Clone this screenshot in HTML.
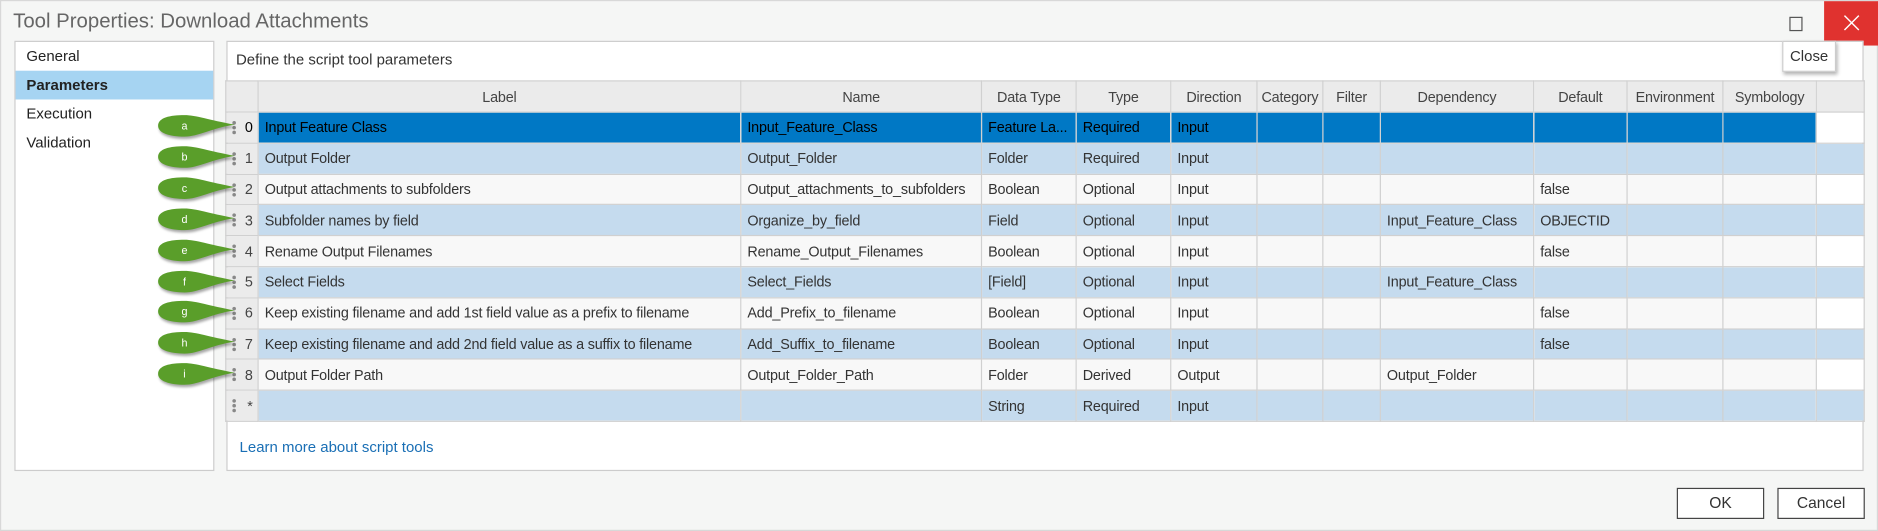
<!DOCTYPE html>
<html><head><meta charset="utf-8"><style>
html,body{margin:0;padding:0;width:1878px;height:531px;overflow:hidden;background:#f5f6f5}
#w{position:absolute;left:0;top:0;width:1568px;height:443px;transform:scale(1.1977,1.1986);transform-origin:0 0;font-family:"Liberation Sans",sans-serif;color:#333;background:#f5f6f5;border:1px solid #d8d8d8;box-sizing:border-box}
.a{position:absolute}
.title{left:10px;top:7px;font-size:17px;color:#666}
.nav{left:11px;top:33px;width:167px;height:359px;background:#fff;border:1px solid #ccc;box-sizing:border-box}
.nav div{height:24px;line-height:24px;padding-left:9px;font-size:12.5px;color:#222}
.nav .sel{background:#a6d4f2;font-weight:bold}
.main{left:188px;top:33px;width:1367px;height:359px;background:#fff;border:1px solid #ccc;box-sizing:border-box}
table{position:absolute;left:187px;top:66px;border-collapse:collapse;table-layout:fixed;font-size:12px;letter-spacing:-0.15px}
td,th{border:1px solid #d0d0d0;height:25.8px;padding:0 0 0 5px;white-space:nowrap;overflow:hidden;text-align:left;font-weight:normal;color:#333;box-sizing:border-box}
th{background:#ebebeb;text-align:center;padding:0;color:#444;height:26px}
td.n{background:#ebebeb;padding:0;text-align:right;padding-right:4px;color:#444;position:relative}
td.n:before{content:"";position:absolute;left:5px;top:7px;width:3px;height:3px;border-radius:50%;background:#888;box-shadow:0 4px 0 #888,0 8px 0 #888}
tr.b td{background:#c5dbee}
tr.g td{background:#f8f8f8}
tr.s td{background:#0078c5;color:#000}
tr td.n{background:#ebebeb}
tr td.e{background:#fff}
tr.b td.e{background:#c5dbee}
.btn{top:406px;width:73px;height:26px;border:1px solid #444;box-sizing:border-box;text-align:center;line-height:24px;font-size:13px;background:#fff;color:#333}
</style></head><body><div id="w">
<div class="a title">Tool Properties: Download Attachments</div>
<div class="a" style="left:1493px;top:13px;width:9px;height:10px;border:1px solid #555"></div>
<div class="a" style="left:1522px;top:0;width:46px;height:37px;background:#e0322f"><svg width="46" height="37"><path d="M17,12 L29,24 M29,12 L17,24" stroke="#fff" stroke-width="1.2"/></svg></div>
<div class="a nav"><div>General</div><div class="sel">Parameters</div><div>Execution</div><div>Validation</div></div>
<div class="a main"></div>
<div class="a" style="left:196px;top:42px;font-size:12.5px;color:#333">Define the script tool parameters</div>
<table>
<colgroup><col style="width:27px"><col style="width:403px"><col style="width:201px"><col style="width:79px"><col style="width:79px"><col style="width:72px"><col style="width:55px"><col style="width:48px"><col style="width:128px"><col style="width:78px"><col style="width:80px"><col style="width:78px"><col style="width:40px"></colgroup>
<tr><th></th><th>Label</th><th>Name</th><th>Data Type</th><th>Type</th><th>Direction</th><th>Category</th><th>Filter</th><th>Dependency</th><th>Default</th><th>Environment</th><th>Symbology</th><th></th></tr>
<tr class="s"><td class="n">0</td><td>Input Feature Class</td><td>Input_Feature_Class</td><td>Feature La...</td><td>Required</td><td>Input</td><td></td><td></td><td></td><td></td><td></td><td></td><td class="e"></td></tr>
<tr class="b"><td class="n">1</td><td>Output Folder</td><td>Output_Folder</td><td>Folder</td><td>Required</td><td>Input</td><td></td><td></td><td></td><td></td><td></td><td></td><td class="e"></td></tr>
<tr class="g"><td class="n">2</td><td>Output attachments to subfolders</td><td>Output_attachments_to_subfolders</td><td>Boolean</td><td>Optional</td><td>Input</td><td></td><td></td><td></td><td>false</td><td></td><td></td><td class="e"></td></tr>
<tr class="b"><td class="n">3</td><td>Subfolder names by field</td><td>Organize_by_field</td><td>Field</td><td>Optional</td><td>Input</td><td></td><td></td><td>Input_Feature_Class</td><td>OBJECTID</td><td></td><td></td><td class="e"></td></tr>
<tr class="g"><td class="n">4</td><td>Rename Output Filenames</td><td>Rename_Output_Filenames</td><td>Boolean</td><td>Optional</td><td>Input</td><td></td><td></td><td></td><td>false</td><td></td><td></td><td class="e"></td></tr>
<tr class="b"><td class="n">5</td><td>Select Fields</td><td>Select_Fields</td><td>[Field]</td><td>Optional</td><td>Input</td><td></td><td></td><td>Input_Feature_Class</td><td></td><td></td><td></td><td class="e"></td></tr>
<tr class="g"><td class="n">6</td><td>Keep existing filename and add 1st field value as a prefix to filename</td><td>Add_Prefix_to_filename</td><td>Boolean</td><td>Optional</td><td>Input</td><td></td><td></td><td></td><td>false</td><td></td><td></td><td class="e"></td></tr>
<tr class="b"><td class="n">7</td><td>Keep existing filename and add 2nd field value as a suffix to filename</td><td>Add_Suffix_to_filename</td><td>Boolean</td><td>Optional</td><td>Input</td><td></td><td></td><td></td><td>false</td><td></td><td></td><td class="e"></td></tr>
<tr class="g"><td class="n">8</td><td>Output Folder Path</td><td>Output_Folder_Path</td><td>Folder</td><td>Derived</td><td>Output</td><td></td><td></td><td>Output_Folder</td><td></td><td></td><td></td><td class="e"></td></tr>
<tr class="b"><td class="n">*</td><td></td><td></td><td>String</td><td>Required</td><td>Input</td><td></td><td></td><td></td><td></td><td></td><td></td><td class="e"></td></tr>
</table>
<div class="a" style="left:199px;top:365px;font-size:12.5px;color:#1a6fb5">Learn more about script tools</div>
<div class="a btn" style="left:1399px">OK</div>
<div class="a btn" style="left:1483px">Cancel</div>
<div class="a" style="left:1487px;top:33px;width:45px;height:26px;background:#fff;border:1px solid #ccc;box-shadow:1px 2px 3px rgba(0,0,0,.3);box-sizing:border-box;font-size:12.5px;text-align:center;line-height:24px;color:#333">Close</div>
<svg class="a" style="left:0;top:0" width="200" height="400">
<defs><g id="c"><path d="M0,9 C0,2 10,0 22,0 C32,0 42,4 64,8 C44,11 34,18 22,18 C10,18 0,15 0,9Z" fill="#5a9e2a" filter="drop-shadow(1px 2px 1px rgba(0,0,0,.35))"/></g></defs>
<g font-family="Liberation Sans,sans-serif" font-size="9" fill="#fff" text-anchor="middle">
<use href="#c" x="131" y="95"/><text x="153" y="107">a</text>
<use href="#c" x="131" y="121"/><text x="153" y="133">b</text>
<use href="#c" x="131" y="147"/><text x="153" y="159">c</text>
<use href="#c" x="131" y="173"/><text x="153" y="185">d</text>
<use href="#c" x="131" y="199"/><text x="153" y="211">e</text>
<use href="#c" x="131" y="225"/><text x="153" y="237">f</text>
<use href="#c" x="131" y="250"/><text x="153" y="262">g</text>
<use href="#c" x="131" y="276"/><text x="153" y="288">h</text>
<use href="#c" x="131" y="302"/><text x="153" y="314">i</text>
</g></svg>
</div></body></html>
